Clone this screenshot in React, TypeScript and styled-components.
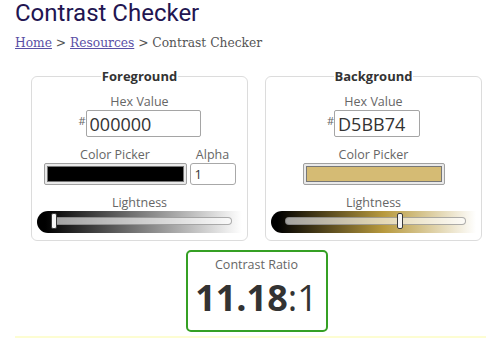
import React from 'react';
import styled, { createGlobalStyle } from 'styled-components';

const GlobalStyle = createGlobalStyle`
  body {
    margin: 0;
    background: #fff;
    font-family: "Open Sans", "Liberation Sans", sans-serif;
    overflow: hidden;
  }
`;

const Page = styled.div`
  padding-left: 15px;
`;

const Title = styled.h1`
  margin: -1px 0 0;
  font-family: Roboto, "Liberation Sans", sans-serif;
  font-size: 24px;
  font-weight: 400;
  line-height: 28px;
  color: #221551;
`;

const Breadcrumb = styled.nav`
  margin-top: 8px;
  font-family: "DejaVu Serif", "Liberation Serif", serif;
  font-size: 12.25px;
  line-height: 16px;
  color: #555;
`;

const Crumb = styled.a`
  color: #5a4fa6;
  text-decoration: underline;
`;

const Panels = styled.div`
  margin: 16px 0 0 16px;
  display: grid;
  grid-template-columns: 217px 217px;
  column-gap: 17px;
  width: 451px;
`;

const Panel = styled.fieldset`
  margin: 0;
  padding: 0 5px 7px;
  min-width: 0;
  border: 1px solid #dcdcdc;
  border-radius: 6px;
  display: flex;
  flex-direction: column;
  align-items: center;
`;

const Legend = styled.legend`
  margin: 0 auto;
  padding: 0 1px;
  font-size: 13px;
  font-weight: 700;
  line-height: 18px;
  color: #333;
`;

const Label = styled.div<{ $gap?: number }>`
  margin-top: ${(p) => p.$gap ?? 0}px;
  font-size: 12.5px;
  line-height: 17px;
  color: #666;
  text-align: center;
`;

const HexRow = styled.div`
  display: flex;
  align-items: flex-start;
`;

const Hash = styled.span`
  font-size: 11px;
  line-height: 11px;
  margin-top: 5px;
  color: #666;
`;

const HexInput = styled.input<{ $width: number }>`
  box-sizing: border-box;
  width: ${(p) => p.$width}px;
  height: 27px;
  margin: 0;
  padding: 0 3px;
  border: 1px solid #a5a5a5;
  border-radius: 2px;
  font-family: "Open Sans", sans-serif;
  font-size: 18px;
  color: #333;
  outline: none;
`;

const PickerRow = styled.div`
  display: flex;
  gap: 3px;
  justify-content: center;
`;

const Column = styled.div`
  display: flex;
  flex-direction: column;
  align-items: center;
`;

const Swatch = styled.div<{ $width: number }>`
  box-sizing: border-box;
  width: ${(p) => p.$width}px;
  height: 22px;
  padding: 2px;
  border: 1px solid #a0a0a0;
  border-radius: 2px;
  background: #e9e9e9;
`;

const SwatchFill = styled.div<{ $color: string }>`
  box-sizing: border-box;
  height: 100%;
  border: 1px solid #777;
  background: ${(p) => p.$color};
`;

const AlphaInput = styled.input`
  box-sizing: border-box;
  width: 46px;
  height: 22px;
  margin: 0;
  padding: 0 4px;
  border: 1px solid #a8a8a8;
  border-radius: 3px;
  font-family: "Open Sans", sans-serif;
  font-size: 13px;
  color: #333;
  outline: none;
`;

const SliderBand = styled.div<{ $gradient: string }>`
  position: relative;
  align-self: stretch;
  height: 22px;
  border-radius: 11px 0 0 11px;
  background: ${(p) => p.$gradient};
`;

const Rail = styled.div`
  position: absolute;
  left: 14px;
  right: 10px;
  top: 6px;
  height: 8px;
  box-sizing: border-box;
  border: 1px solid rgba(110, 110, 110, 0.55);
  border-radius: 4px;
  background: rgba(255, 255, 255, 0.62);
`;

const Thumb = styled.div`
  position: absolute;
  top: -5px;
  width: 6px;
  height: 16px;
  box-sizing: border-box;
  border: 1px solid #3a3a3a;
  border-radius: 2px;
  background: #f6f6f6;
`;

const ResultRow = styled.div`
  width: 451px;
  margin: 9px 0 0 16px;
  display: flex;
  justify-content: center;
`;

const ResultBox = styled.div`
  box-sizing: border-box;
  width: 142px;
  height: 82px;
  padding-top: 5px;
  border: 2px solid #35a024;
  border-radius: 5px;
  text-align: center;
`;

const RatioLabel = styled.div`
  font-size: 12.5px;
  line-height: 16px;
  color: #666;
`;

const Ratio = styled.div`
  font-size: 36px;
  line-height: 50px;
  color: #333;
`;

const RatioValue = styled.span`
  font-weight: 700;
`;

const Footer = styled.div`
  margin-top: 4px;
  height: 4px;
  background: #fdfdd2;
`;

type Slider = { gradient: string; value: number };

const LightnessSlider: React.FC<Slider> = ({ gradient, value }) => (
  <SliderBand $gradient={gradient}>
    <Rail>
      <Thumb style={{ left: `calc(${value} * (100% - 6px) - 1px)` }} />
    </Rail>
  </SliderBand>
);

const App: React.FC = () => (
  <Page>
    <GlobalStyle />
    <Title>Contrast Checker</Title>
    <Breadcrumb>
      <Crumb href="#">Home</Crumb> &gt; <Crumb href="#">Resources</Crumb> &gt; Contrast Checker
    </Breadcrumb>

    <Panels>
      <Panel>
        <Legend>Foreground</Legend>
        <Label $gap={8}>Hex Value</Label>
        <HexRow>
          <Hash>#</Hash>
          <HexInput $width={115} defaultValue="000000" />
        </HexRow>
        <PickerRow>
          <Column>
            <Label $gap={9}>Color Picker</Label>
            <Swatch $width={143}>
              <SwatchFill $color="#000000" />
            </Swatch>
          </Column>
          <Column>
            <Label $gap={9}>Alpha</Label>
            <AlphaInput defaultValue="1" />
          </Column>
        </PickerRow>
        <Label $gap={9}>Lightness</Label>
        <LightnessSlider gradient="linear-gradient(to right, #000 4%, #fff 100%)" value={0} />
      </Panel>

      <Panel>
        <Legend>Background</Legend>
        <Label $gap={8}>Hex Value</Label>
        <HexRow>
          <Hash>#</Hash>
          <HexInput $width={86} defaultValue="D5BB74" />
        </HexRow>
        <Column>
          <Label $gap={9}>Color Picker</Label>
          <Swatch $width={142}>
            <SwatchFill $color="#d5bb74" />
          </Swatch>
        </Column>
        <Label $gap={9}>Lightness</Label>
        <LightnessSlider
          gradient="linear-gradient(to right, #000 3%, #b89a3e 55%, #fff 100%)"
          value={0.645}
        />
      </Panel>
    </Panels>

    <ResultRow>
      <ResultBox>
        <RatioLabel>Contrast Ratio</RatioLabel>
        <Ratio>
          <RatioValue>11.18</RatioValue>:1
        </Ratio>
      </ResultBox>
    </ResultRow>
    <Footer />
  </Page>
);

export default App;
